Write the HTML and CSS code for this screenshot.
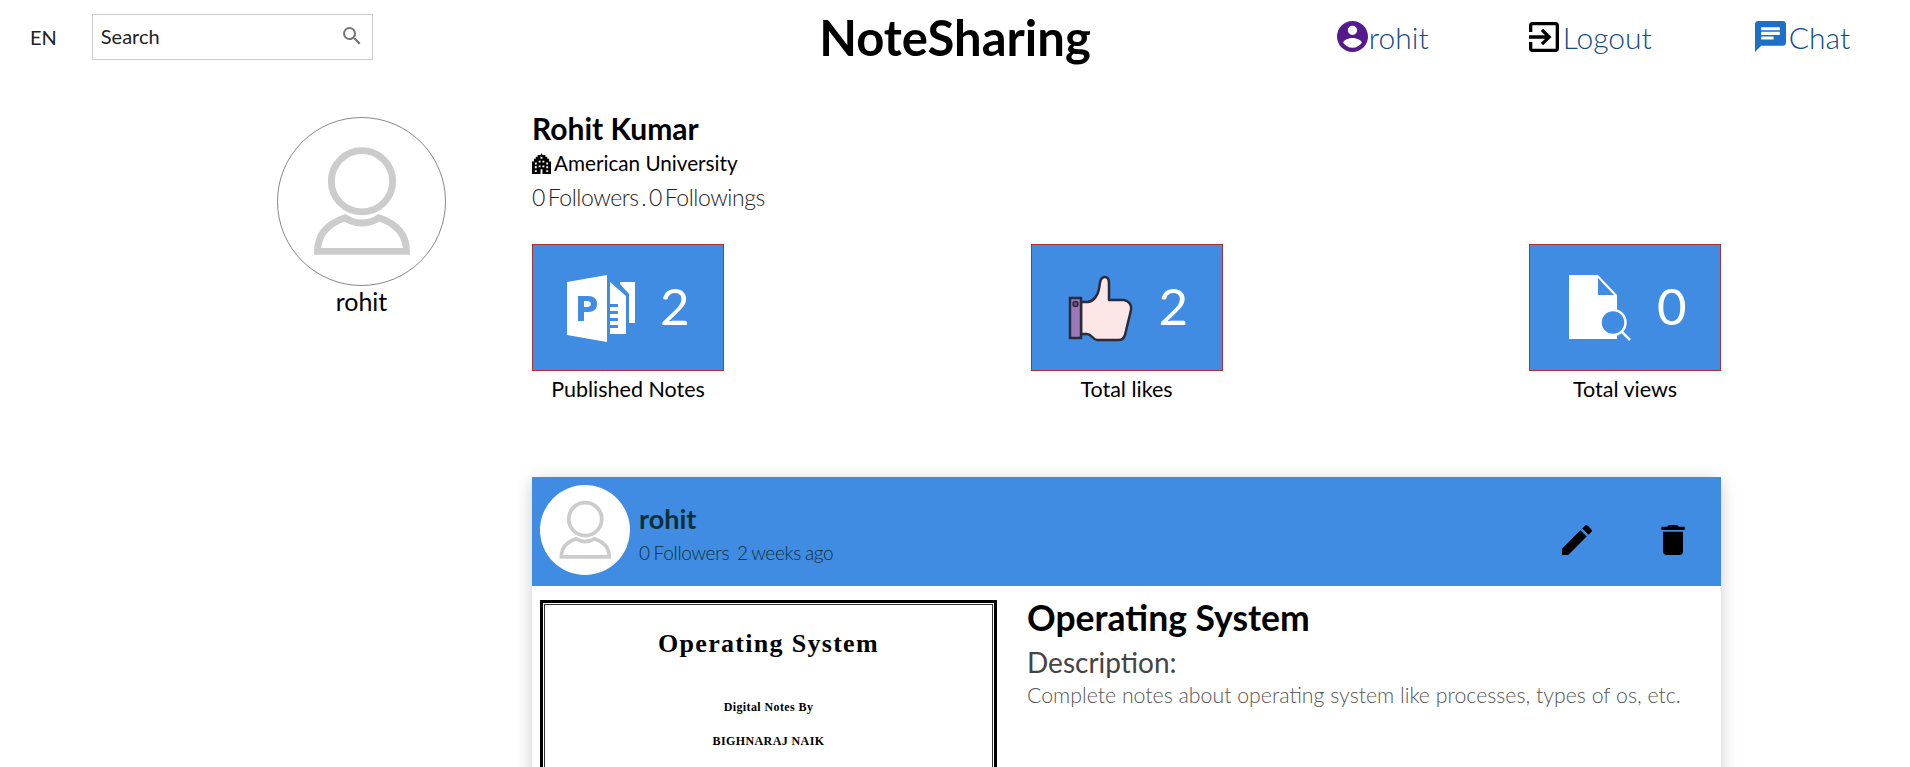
FILE: index.html
```html
<!DOCTYPE html>
<html lang="en">
<head>
    <meta charset="UTF-8">
    <title>NoteSharing</title>
    <link rel="stylesheet" href="styles.css">
</head>
<body>

    <svg class="defs" width="0" height="0">
        <symbol id="person" viewBox="0 0 169 169">
            <circle cx="85" cy="64" r="31" fill="none" stroke="#ccc" stroke-width="7"/>
            <path d="M40 135C40 116 53 106 68 101C78 108 92 108 102 101C117 106 130 116 130 135Z" fill="none" stroke="#ccc" stroke-width="7"/>
        </symbol>
    </svg>

    <header class="topbar">
        <div class="topbar-left">
            <span class="lang">EN</span>
            <div class="search">
                <span>Search</span>
                <svg viewBox="0 0 24 24" width="24" height="24"><path fill="#757575" d="M15.5 14h-.79l-.28-.27A6.47 6.47 0 0 0 16 9.5 6.5 6.5 0 1 0 9.5 16c1.61 0 3.09-.59 4.23-1.57l.27.28v.79l5 4.99L20.49 19l-4.99-5zm-6 0C7.01 14 5 11.99 5 9.5S7.01 5 9.5 5 14 7.01 14 9.5 11.99 14 9.5 14z"/></svg>
            </div>
        </div>
        <div class="brand">NoteSharing</div>
        <nav class="topbar-right">
            <a class="nav-link nav-user">
                <svg viewBox="2 2 20 20" width="31" height="31"><path fill="#551a8b" d="M12 2C6.48 2 2 6.48 2 12s4.48 10 10 10 10-4.48 10-10S17.52 2 12 2zm0 3c1.66 0 3 1.34 3 3s-1.34 3-3 3-3-1.34-3-3 1.34-3 3-3zm0 14.2c-2.5 0-4.71-1.28-6-3.22.03-1.99 4-3.08 6-3.08 1.99 0 5.97 1.09 6 3.08-1.29 1.94-3.5 3.22-6 3.22z"/></svg>
                rohit
            </a>
            <a class="nav-link nav-logout">
                <svg viewBox="3 3 18 18" width="30" height="30"><path d="M10.09 15.59 11.5 17l5-5-5-5-1.41 1.41L12.67 11H3v2h9.67l-2.58 2.59zM19 3H5c-1.11 0-2 .9-2 2v4h2V5h14v14H5v-4H3v4c0 1.1.89 2 2 2h14c1.1 0 2-.9 2-2V5c0-1.1-.9-2-2-2z"/></svg>
                Logout
            </a>
            <a class="nav-link nav-chat">
                <svg viewBox="2 2 20 20" width="31" height="31"><path fill="#1e6fc6" d="M20 2H4c-1.1 0-2 .9-2 2v18l4-4h14c1.1 0 2-.9 2-2V4c0-1.100-.9-2-2-2zM6 9h12v2H6V9zm8 5H6v-2h8v2zm4-6H6V6h12v2z"/></svg>
                Chat
            </a>
        </nav>
    </header>

    <main class="profile">
        <aside class="profile-side">
            <div class="avatar">
                <svg width="167" height="167"><use href="#person"/></svg>
            </div>
            <div class="side-name">rohit</div>
        </aside>

        <section class="profile-main">
            <h1 class="full-name">Rohit Kumar</h1>
            <div class="college">
                <svg viewBox="0 0 20 22" width="19" height="21">
                    <path d="M10 0l1 2h3v2h2v2h2v3h2v13H0V9h2V6h2V4h2V2h3z"/>
                    <path fill="#fff" d="M3 10h2v2H3zM3 14h2v2H3zM3 18h2v2H3zM15 10h2v2h-2zM15 14h2v2h-2zM15 18h2v2h-2zM7 8h2v2H7zM11 8h2v2h-2zM7 13h2v2H7zM11 13h2v2h-2zM9 4h2v2H9zM9 17h2v5H9z"/>
                </svg>
                American University
            </div>
            <div class="follow">0 Followers . 0 Followings</div>

            <div class="stats">
                <div class="stat">
                    <div class="stat-box">
                        <svg viewBox="0 0 80 80" width="80" height="80">
                            <path fill="#fff" d="M7 14 47 7V74L7 67z"/>
                            <path fill="#3f8ce2" d="M18 28h10c6 0 9 3 9 8s-3 8-9 8h-4v9h-6zm6 5v6h3c2 0 4-1 4-3s-2-3-4-3z"/>
                            <path fill="#fff" d="M60 14h15v41h-6V26L60 16z"/>
                            <path fill="#fff" d="M50 14l16 14v38H50v-6h8v-3h-8v-4h8v-3h-8v-4h8v-3h-8v-4h8v-3h-8z"/>
                        </svg>
                        <span class="stat-num">2</span>
                    </div>
                    <div class="stat-label">Published Notes</div>
                </div>
                <div class="stat">
                    <div class="stat-box">
                        <svg viewBox="0 0 80 80" width="80" height="80">
                            <path fill="#fde7e6" stroke="#2b2b3a" stroke-width="2.500" stroke-linejoin="round" d="M22 34H29C35 33 39 27 40 21C41 15 41 9 46 9C50 9 50 13 50 18V32H65C70 33 73 37 72 42L66 67C65 70 63 72 60 72H38C34 72 33 66 28 66H22Z"/>
                            <path fill="#9b78b8" stroke="#2b2b3a" stroke-width="2.500" d="M11 30H22V70H11z"/>
                            <circle cx="16.500" cy="36" r="2.500" fill="#6a4f85" stroke="#2b2b3a" stroke-width="1.500"/>
                        </svg>
                        <span class="stat-num">2</span>
                    </div>
                    <div class="stat-label">Total likes</div>
                </div>
                <div class="stat">
                    <div class="stat-box">
                        <svg viewBox="0 0 80 80" width="80" height="80">
                            <path fill="#fff" d="M12 7H41L60 27V71H12z"/>
                            <path fill="#3f8ce2" d="M41 10V27H57z"/>
                            <path stroke="#fff" stroke-width="2.500" d="M62 61 73 72"/>
                            <circle cx="56" cy="54.500" r="12.500" fill="#3f8ce2" stroke="#fff" stroke-width="2.500"/>
                        </svg>
                        <span class="stat-num">0</span>
                    </div>
                    <div class="stat-label">Total views</div>
                </div>
            </div>

            <article class="note">
                <div class="note-head">
                    <div class="note-avatar">
                        <svg width="90" height="90"><use href="#person"/></svg>
                    </div>
                    <div class="note-owner">
                        <div class="owner-name">rohit</div>
                        <div class="owner-meta">0 Followers&nbsp; 2 weeks ago</div>
                    </div>
                    <div class="note-actions">
                        <svg viewBox="0 0 24 24" width="40" height="40"><path d="M3 17.250V21h3.750L17.810 9.940l-3.750-3.750L3 17.250zM20.710 7.040c.39-.39.39-1.020 0-1.410l-2.340-2.340a.996.996 0 0 0-1.410 0l-1.830 1.830 3.750 3.750 1.830-1.830z"/></svg>
                        <svg viewBox="0 0 24 24" width="40" height="40"><path d="M6 19c0 1.100.9 2 2 2h8c1.100 0 2-.9 2-2V7H6v12zM19 4h-3.500l-1-1h-5l-1 1H5v2h14V4z"/></svg>
                    </div>
                </div>
                <div class="note-body">
                    <div class="thumb">
                        <div class="thumb-inner">
                            <div class="thumb-title">Operating System</div>
                            <div class="thumb-by">Digital Notes By</div>
                            <div class="thumb-author">BIGHNARAJ NAIK</div>
                        </div>
                    </div>
                    <div class="note-text">
                        <h2>Operating System</h2>
                        <h3>Description:</h3>
                        <p>Complete notes about operating system like processes, types of os, etc.</p>
                    </div>
                </div>
            </article>
        </section>
    </main>

</body>
</html>
```

FILE: styles.css
```css
html, body {
    height: 767px;
    overflow: hidden;
}

body {
    margin: 0;
    font-family: Lato, "Open Sans", sans-serif;
    font-weight: 300;
    background-color: #fff;
    color: #000;
}

.defs {
    display: block;
}

/* top bar */
.topbar {
    display: grid;
    grid-template-columns: 1fr auto 1fr;
    align-items: center;
    box-sizing: border-box;
    height: 75px;
    padding-bottom: 2px;
}

.topbar-left {
    display: flex;
    align-items: center;
    padding-left: 30px;
}

.lang {
    font-size: 20px;
    font-weight: 400;
    color: #222;
}

.search {
    display: flex;
    align-items: center;
    justify-content: space-between;
    box-sizing: border-box;
    width: 281px;
    height: 46px;
    margin-left: 35px;
    padding: 0 8px 2px 8px;
    border: 1px solid #ccc;
    font-size: 20px;
    font-weight: 400;
    color: #222;
}

.brand {
    font-size: 49px;
    font-weight: 700;
}

.topbar-right {
    display: flex;
    align-items: center;
    padding-left: 246px;
}

.nav-link {
    display: flex;
    align-items: center;
    gap: 1px;
    font-size: 30px;
    color: #124a8a;
}

.nav-logout {
    margin-left: 100px;
    gap: 4px;
}

.nav-chat {
    margin-left: 103px;
    gap: 3px;
}

/* profile */
.profile {
    display: flex;
    padding: 42px 0 0 277px;
}

.profile-side {
    width: 169px;
    margin-right: 86px;
    text-align: center;
}

.avatar {
    box-sizing: border-box;
    width: 169px;
    height: 169px;
    border: 1px solid #888;
    border-radius: 50%;
}

.side-name {
    font-size: 25px;
    font-weight: 400;
}

.profile-main {
    width: 1189px;
    margin-top: -5px;
}

.full-name {
    margin: 0;
    font-size: 30px;
    font-weight: 700;
    line-height: 32px;
}

.college {
    display: flex;
    align-items: center;
    gap: 3px;
    margin-top: 6px;
    font-size: 20.700px;
    font-weight: 400;
    line-height: 26px;
}

.follow {
    margin-top: 7px;
    font-size: 23px;
    letter-spacing: -0.45px;
    word-spacing: -3px;
    line-height: 28px;
    color: #222;
}

.stats {
    display: flex;
    justify-content: space-between;
    margin-top: 33px;
}

.stat {
    width: 192px;
    text-align: center;
}

.stat-box {
    display: flex;
    align-items: center;
    gap: 20px;
    box-sizing: border-box;
    height: 127px;
    padding-left: 27px;
    border: 1px solid #b03030;
    background-color: #3f8ce2;
}

.stat-num {
    padding-bottom: 4px;
    font-size: 51px;
    font-weight: 400;
    color: #fff;
}

.stat-label {
    margin-top: 4px;
    font-size: 21.500px;
    font-weight: 400;
    line-height: 28px;
}

/* note card */
.note {
    margin-top: 74px;
    height: 400px;
    box-shadow: 0 4px 16px rgba(0, 0, 0, 0.2);
}

.note-head {
    display: flex;
    align-items: flex-start;
    box-sizing: border-box;
    height: 109px;
    padding: 8px 28px 0 8px;
    background-color: #3f8ce2;
}

.note-avatar {
    width: 90px;
    height: 90px;
    border-radius: 50%;
    background-color: #fff;
}

.note-owner {
    margin: 17px 0 0 9px;
}

.owner-name {
    font-size: 27px;
    font-weight: 700;
    line-height: 34px;
    color: #0d3038;
}

.owner-meta {
    margin-top: 5px;
    font-size: 19px;
    letter-spacing: -0.3px;
    word-spacing: -1px;
    color: #0d3038;
}

.note-actions {
    display: flex;
    gap: 56px;
    margin: 35px 0 0 auto;
}

.note-body {
    display: flex;
    padding: 14px 8px 0;
}

.thumb {
    box-sizing: border-box;
    width: 457px;
    height: 300px;
    padding: 1px;
    border: 3px solid #000;
}

.thumb-inner {
    box-sizing: border-box;
    height: 100%;
    padding-top: 23px;
    border: 1px solid #333;
    font-family: "Liberation Serif", serif;
    font-weight: 700;
    text-align: center;
}

.thumb-title {
    font-size: 26px;
    letter-spacing: 1.3px;
    line-height: 32px;
}

.thumb-by {
    margin-top: 40px;
    font-size: 12px;
    letter-spacing: 0.4px;
    line-height: 14px;
}

.thumb-author {
    margin-top: 20px;
    font-size: 12px;
    letter-spacing: 0.4px;
    line-height: 14px;
}

.note-text {
    margin: -3px 0 0 30px;
}

.note-text h2 {
    margin: 0;
    font-size: 35.500px;
    font-weight: 700;
    line-height: 42px;
}

.note-text h3 {
    margin: 6px 0 0;
    font-size: 28px;
    font-weight: 400;
    line-height: 34px;
    color: #444;
}

.note-text p {
    margin: 3px 0 0;
    font-size: 21.300px;
    line-height: 26px;
    color: #555;
}
```
